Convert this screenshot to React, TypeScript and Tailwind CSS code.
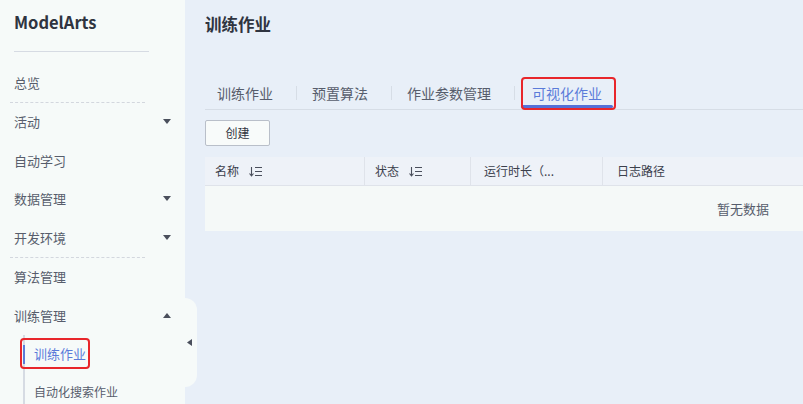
import React from "react";

const font = { fontFamily: '"Noto Sans CJK SC", "Noto Sans", sans-serif' };

function Caret({ up = false }: { up?: boolean }) {
  return (
    <svg width="8" height="5" viewBox="0 0 8 5" className="text-[#4a4f5c]">
      {up ? <path d="M0 5 L4 0 L8 5 Z" fill="currentColor" /> : <path d="M0 0 L8 0 L4 5 Z" fill="currentColor" />}
    </svg>
  );
}

function SortIcon() {
  return (
    <svg width="14" height="11" viewBox="0 0 14 11" className="text-[#4a4f5c]">
      <path d="M2.5 1 V9.5 M0.5 7.5 L2.5 9.8 L4.5 7.5" stroke="currentColor" strokeWidth="1.1" fill="none" />
      <path d="M6 1.5 H13 M6 5.5 H13 M6 9.5 H13" stroke="currentColor" strokeWidth="1.1" />
    </svg>
  );
}

function NavItem({ label, caret }: { label: string; caret?: "up" | "down" }) {
  return (
    <div className="flex h-[38.5px] items-center justify-between px-[14px]">
      <span className="text-[13px] text-[#575d6c]">{label}</span>
      {caret && <Caret up={caret === "up"} />}
    </div>
  );
}

function Dashed() {
  return <div className="mx-[10px] w-[135px] border-t border-dashed border-[#d3d7de]" />;
}

export default function App() {
  return (
    <div className="flex h-[404px] w-[803px] overflow-hidden bg-[#e8eff8]" style={font}>
      {/* sidebar */}
      <aside className="relative w-[185px] shrink-0 bg-[#f6faf9]">
        <div className="flex h-[63px] flex-col px-[14px]">
          <div className="pt-[10px] text-[16.5px] font-bold leading-[24px] text-[#2f3440]">ModelArts</div>
          <div className="mt-[17px] w-[135px] border-t border-[#d6dbe3]" />
        </div>
        <NavItem label="总览" />
        <Dashed />
        <NavItem label="活动" caret="down" />
        <NavItem label="自动学习" />
        <NavItem label="数据管理" caret="down" />
        <NavItem label="开发环境" caret="down" />
        <Dashed />
        <NavItem label="算法管理" />
        <NavItem label="训练管理" caret="up" />
        <div className="ml-[23px] border-l-2 border-[#d6dbe3]">
          <div className="relative flex h-[38.5px] items-center">
            <div className="absolute left-[-2px] top-[10px] h-[19px] w-[2px] bg-[#5b7bd9]" />
            <span className="pl-[9px] text-[13px] text-[#5b7bd9]">训练作业</span>
            <div className="absolute left-[-5px] top-[3px] h-[31px] w-[70px] rounded-[4px] border-2 border-[#e8262b]" />
          </div>
          <div className="flex h-[38.5px] items-center pl-[9px] text-[12px] text-[#575d6c]">自动化搜索作业</div>
        </div>
        <div className="absolute right-[-12px] top-[298px] flex h-[89px] w-[12px] items-center rounded-r-[12px] bg-[#f6faf9]">
          <svg width="5" height="7" viewBox="0 0 5 7" className="ml-[2px] text-[#4a4f5c]">
            <path d="M5 0 L0 3.5 L5 7 Z" fill="currentColor" />
          </svg>
        </div>
      </aside>

      {/* main */}
      <main className="min-w-0 flex-1 pl-[20px]">
        <h1 className="pt-[12px] text-[16.5px] font-bold leading-[24px] text-[#2f3440]">训练作业</h1>

        <div className="mt-[41px] flex h-[33px] items-stretch border-b border-[#d6dde6]">
          {["训练作业", "预置算法", "作业参数管理"].map((t) => (
            <div key={t} className="flex items-center">
              <span className="pl-[12px] pr-[20px] text-[14px] text-[#575d6c]">{t}</span>
              <span className="mx-[3px] h-[14px] w-px bg-[#d6dde6]" />
            </div>
          ))}
          <div className="relative ml-[3px] flex items-center">
            <span className="pl-[11px] pr-[14px] text-[14px] text-[#5b7bd9]">可视化作业</span>
            <div className="absolute bottom-[1px] left-0 right-[3px] h-[3px] rounded-full bg-[#5470d8]" />
            <div className="absolute bottom-[-1px] left-0 right-0 top-0 rounded-[4px] border-2 border-[#e8262b]" />
          </div>
        </div>

        <button className="mt-[10px] h-[26px] w-[65px] rounded-[2px] border border-[#b9bfc9] bg-[#f8fbfa] text-[12px] text-[#2f3440]">
          创建
        </button>

        <div className="mt-[11px] w-[1076px]">
          <div className="flex h-[29px] items-center border-b border-[#dfe3ea] bg-[#eef2f8] text-[12px] text-[#3b404c]">
            <div className="flex h-full w-[160px] items-center gap-[10px] border-r border-[#dfe3ea] pl-[10px]">
              名称 <SortIcon />
            </div>
            <div className="flex h-full w-[106px] items-center gap-[10px] border-r border-[#dfe3ea] pl-[10px]">
              状态 <SortIcon />
            </div>
            <div className="flex h-full w-[132px] items-center border-r border-[#dfe3ea] pl-[13px]">运行时长（...</div>
            <div className="flex h-full flex-1 items-center pl-[14px]">日志路径</div>
          </div>
          <div className="flex h-[45px] items-center justify-center bg-[#f5f9f8] text-[13px] text-[#575d6c]">暂无数据</div>
        </div>
      </main>
    </div>
  );
}
